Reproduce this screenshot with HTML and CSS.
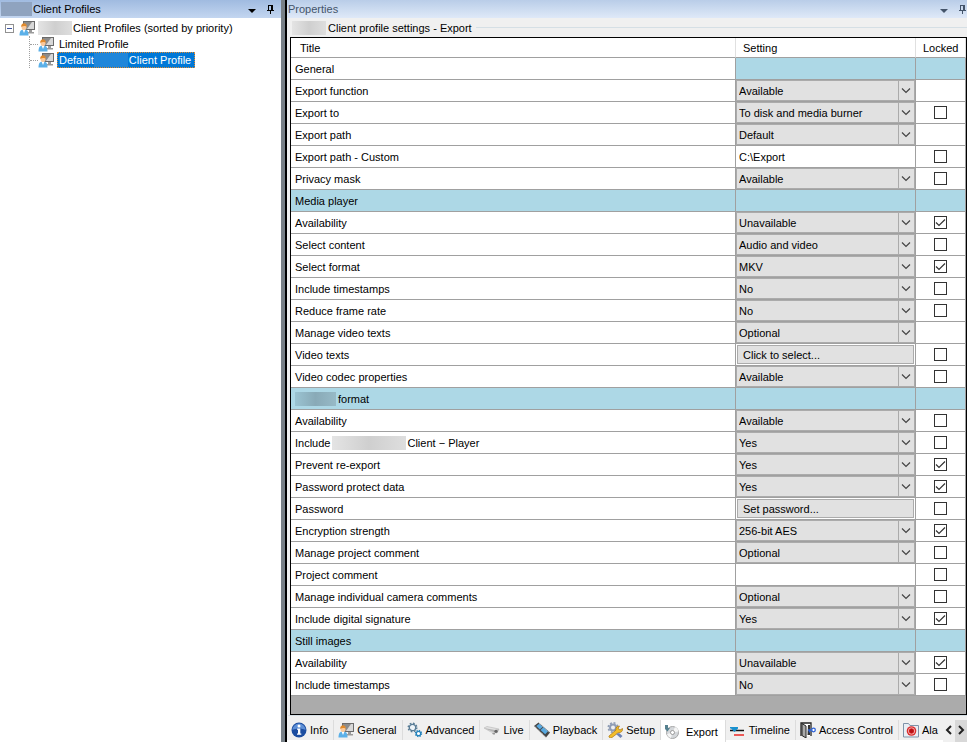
FILE: index.html
```html
<!DOCTYPE html>
<html lang="en">
<head>
    <meta charset="UTF-8">
    <title>Client Profiles</title>
    <link rel="stylesheet" href="styles.css">
</head>
<body>
    <svg class="defs">
        <symbol id="profile" viewBox="0 0 16 16">
            <path d="M4 1h12v9H4z" fill="#6b6b6b"/>
            <path d="M5 2h10v7H5z" fill="#8c8c8c"/>
            <path d="M15 2v7H8l5-7z" fill="#d8d8d8"/>
            <path d="M10 10h3v2h2v1.500H8V12h2z" fill="#9a9a9a"/>
            <path d="M.5 15.500c0-4.500 1.500-6 4.500-6s4.500 1.500 4.500 6z" fill="#5bb0e8"/>
            <path d="M3.500 9.500L5 13l1.500-3.500z" fill="#fff"/>
            <ellipse cx="5" cy="7" rx="2.500" ry="3" fill="#fbc99a"/>
            <path d="M2.300 7C1.500 2 8.500 2 7.700 7 7 5.500 4 5.500 2.300 7z" fill="#e08a2c"/>
        </symbol>
        <symbol id="pin" viewBox="0 0 7 9">
            <path d="M1 0h5v5H5V1H2v4H1zM4 1h1v4H4zM0 5h7v1H0zM3 6h1v3H3z" fill="currentColor"/>
        </symbol>
    </svg>
    <div class="container">
        <div class="sidebar">
            <div class="titlebar active">
                <span class="blur"></span>
                <h1>Client Profiles</h1>
                <span class="arrow"></span>
                <svg class="pin"><use href="#pin"/></svg>
            </div>
            <ul class="tree">
                <li>
                    <div class="node"><span class="toggle"></span><svg class="icon"><use href="#profile"/></svg><span class="label root"><span class="blur"></span>Client Profiles (sorted by priority)</span></div>
                    <ul>
                        <li><div class="node"><svg class="icon"><use href="#profile"/></svg><span class="label">Limited Profile</span></div></li>
                        <li><div class="node"><svg class="icon"><use href="#profile"/></svg><span class="label selected">Default<span class="blur"></span>Client Profile</span></div></li>
                    </ul>
                </li>
            </ul>
        </div>
        <div class="splitter"></div>
        <div class="properties">
            <div class="titlebar">
                <h1>Properties</h1>
                <span class="arrow"></span>
                <svg class="pin"><use href="#pin"/></svg>
            </div>
            <div class="group">
                <h2><span class="blur"></span>Client profile settings - Export</h2>
                <div class="grid">
                    <table>
                        <thead>
                            <tr><th>Title</th><th class="setting">Setting</th><th class="locked">Locked</th></tr>
                        </thead>
                        <tbody></tbody>
                    </table>
                </div>
            </div>
            <div class="tabs">
                <div class="tablist">
                    <button class="tab"><svg class="icon" viewBox="0 0 16 16"><circle cx="8" cy="8" r="7.500" fill="#1c4da0"/><path d="M1.500 8a6.500 6.500 0 0 1 13 0c-4-2-9-2-13 0z" fill="#5d8fd6"/><circle cx="8" cy="4" r="1.500" fill="#fff"/><path d="M6 6.500h3.300v5h1v1.200H6v-1.200h1V7.700H6z" fill="#fff"/></svg>Info</button>
                    <button class="tab"><svg class="icon"><use href="#profile"/></svg>General</button>
                    <button class="tab"><svg class="icon" viewBox="0 0 16 16"><circle cx="5.500" cy="5.500" r="3.200" fill="#eef4f8" stroke="#5a7d96" stroke-width="1.300"/><circle cx="5.500" cy="5.500" r="4.300" fill="none" stroke="#5a7d96" stroke-width="1.400" stroke-dasharray="1.700 1.680"/><circle cx="11.500" cy="11.500" r="2.200" fill="#fff" stroke="#2684bd" stroke-width="1.300"/><circle cx="11.500" cy="11.500" r="3.100" fill="none" stroke="#2684bd" stroke-width="1.200" stroke-dasharray="1.300 1.130"/></svg>Advanced</button>
                    <button class="tab"><svg class="icon" viewBox="0 0 16 16"><path d="M0 6l3-1.500 12 2.500-2 4-6-1z" fill="#e2e2e2" stroke="#b5b5b5" stroke-width=".6"/><path d="M0 6l8 3.500 5 1.500 2-4-4 1z" fill="#b5b5b5"/><circle cx="12" cy="9.300" r="1.600" fill="#666"/><path d="M8 11h3v1.500H9z" fill="#999"/></svg>Live</button>
                    <button class="tab"><svg class="icon" viewBox="0 0 16 16"><path d="M0 4l4.500-3.500L16 10.500l-4 5z" fill="#444"/><path d="M2.300 4l3-2.300 3.500 3-3 2.700zM6.500 8l3-2.700 4.500 4-2.800 3z" fill="#58a9e0"/><path d="M1 4.700l10.500 10M5 1L15.300 10.500" stroke="#ccc" stroke-width=".9" stroke-dasharray="1 1"/></svg>Playback</button>
                    <button class="tab"><svg class="icon" viewBox="0 0 16 16"><circle cx="6" cy="5.500" r="3" fill="none" stroke="#8f9db5" stroke-width="2"/><circle cx="6" cy="5.500" r="4.700" fill="none" stroke="#8f9db5" stroke-width="1.600" stroke-dasharray="2 1.690"/><path d="M2 14l7-6c-.5-2.500 1-4 3.500-4L11 6.500l2 1.500 2.500-1.500c.5 3-2 4.500-4 4L5 15.500c-2 .8-3.500 0-3-1.500z" fill="#f2bd2a" stroke="#a87411" stroke-width=".7"/><path d="M9 12l3-1 3.500 3-2 2z" fill="#6d83b5"/></svg>Setup</button>
                    <button class="tab current"><svg class="icon" viewBox="0 0 16 16"><circle cx="7.500" cy="8.500" r="6" fill="#d4d7da" stroke="#a5a5a5"/><path d="M7.500 8.500L10 3c2 .8 3.300 2.500 3.500 4.500zM7.500 8.500L6 14c-2-.5-3.500-2-4-4z" fill="#f5f5f5"/><circle cx="7.500" cy="8.500" r="2" fill="#fff" stroke="#888" stroke-width=".8"/><path d="M0 1h3v3h2L2.500 7.500 0 5z" fill="#55808f"/></svg>Export</button>
                    <button class="tab"><svg class="icon" viewBox="0 0 16 16"><path d="M0 8.500h14" stroke="#111" stroke-width="1.500"/><path d="M0 5h8v1.500L4.500 10 1 6.500H0z" fill="#1a91cf"/><path d="M4 13h10" stroke="#ec5a58" stroke-width="2"/></svg>Timeline</button>
                    <button class="tab"><svg class="icon" viewBox="0 0 16 16"><path d="M1 14V1h10v13" fill="#fff" stroke="#222" stroke-width="1.300"/><path d="M2 1.500l4 2.500v12l-4-2.500z" fill="#aaa" stroke="#222"/><path d="M8 3h2v10H7.500z" fill="#333"/><path d="M8 8h5M9.500 8v2.500" stroke="#2d62d8" stroke-width="1.400"/><circle cx="13.500" cy="8" r="1.800" fill="#fff" stroke="#2d62d8" stroke-width="1.300"/></svg>Access Control</button>
                    <button class="tab"><svg class="icon" viewBox="0 0 16 16"><path d="M.5 15V1.500h5l1.500 2h8.500V15z" fill="#e9eef4" stroke="#7f93a8"/><circle cx="8.500" cy="9" r="4.800" fill="#d92a2a"/><circle cx="8.500" cy="9" r="3.200" fill="none" stroke="#f7c4c4" stroke-width=".8"/><circle cx="8.500" cy="9" r="2" fill="#b80f14"/></svg>Ala</button>
                </div>
                <button class="scroll" aria-label="Previous"><svg viewBox="0 0 8 10"><path d="M6 1L2 5l4 4"/></svg></button>
                <button class="scroll next" aria-label="Next"><svg viewBox="0 0 8 10"><path d="M2 1l4 4-4 4"/></svg></button>
            </div>
        </div>
    </div>
<script src="script.js"></script>
</body>
</html>
```
FILE: styles.css
```css
*{
    box-sizing: border-box;
    margin: 0;
    padding: 0;
}
body,button,select,input{
    font-family: "Liberation Sans", Arial, sans-serif;
    font-size: 11px;
    color: #000;
}
h1,h2,th{
    font-size: 11px;
    font-weight: normal;
}
ul{
    list-style: none;
}
.defs{
    display: none;
}
.container{
    display: flex;
    height: 100vh;
    overflow: hidden;
}
.sidebar{
    width: 281px;
    flex: none;
    background: #fff;
}
.splitter{
    width: 6px;
    flex: none;
    background: #788087;
    border-right: 2px solid #000;
}
.properties{
    flex: 1;
    min-width: 0;
    display: flex;
    flex-direction: column;
    background: #f0f0f0;
}
.titlebar{
    display: flex;
    align-items: center;
    height: 18px;
    flex: none;
    padding: 0 1px;
    color: #44546a;
    background: linear-gradient(#b9cde8, #dfe9f8);
}
.titlebar.active{
    padding-right: 7px;
    color: #000;
    background: linear-gradient(#a0bbe0, #c3d6f0);
}
.titlebar h1{
    flex: 1;
}
.titlebar .blur{
    width: 31px;
    height: 14px;
    margin-right: 1px;
    background: #8fa3bf;
}
.arrow{
    border: 4px solid transparent;
    border-top-color: currentColor;
    border-bottom: 0;
    margin: 3px 11px 0 0;
}
.pin{
    width: 7px;
    height: 9px;
}
.icon{
    width: 16px;
    height: 16px;
    flex: none;
}
.blur{
    display: inline-block;
    height: 14px;
    background: linear-gradient(90deg, #e4e4e4, #cfcfcf 50%, #dedede);
}

/* tree */
.tree{
    padding: 2px 0 0 5px;
}
.node{
    display: flex;
    align-items: center;
    height: 16px;
}
.toggle{
    width: 9px;
    height: 9px;
    margin-right: 5px;
    border: 1px solid #919191;
    background: linear-gradient(#3b53a0, #3b53a0) center / 5px 1px no-repeat #fff;
}
.label{
    display: flex;
    align-items: center;
    height: 16px;
    margin-left: 3px;
    padding: 0 4px 0 2px;
}
.label.root{
    padding: 0;
}
.label .blur{
    width: 34px;
    margin-right: 1px;
}
.tree ul{
    margin-left: 24px;
    border-left: 1px dotted #a0a0a0;
}
.tree ul .node::before{
    content: "";
    width: 8px;
    border-top: 1px dotted #a0a0a0;
}
.selected{
    color: #fff;
    background: #0078d7;
    outline: 1px dotted #e08a30;
    outline-offset: -1px;
}
.selected .blur{
    background: #1f86da;
}

/* settings grid */
.group{
    flex: 1;
    min-height: 0;
    display: flex;
    flex-direction: column;
    margin: 2px 0 4px 1px;
    border-bottom: 1px solid #d5dfe5;
}
.group h2{
    display: flex;
    align-items: center;
    height: 17px;
    flex: none;
    padding: 0 0 2px 4px;
}
.group h2 .blur{
    width: 34px;
    margin-right: 2px;
}
.group h2::after{
    content: "";
    flex: 1;
    margin-left: 4px;
    border-top: 1px solid #d5dfe5;
}
.grid{
    flex: 1;
    min-height: 0;
    margin-left: 2px;
    overflow: hidden;
    border: 1px solid #000;
    background: #ababab;
}
table{
    width: 100%;
    table-layout: fixed;
    border-collapse: separate;
    border-spacing: 0;
    background: #fff;
}
th,td{
    height: 22px;
    border-right: 1px solid #a0a0a0;
    border-bottom: 1px solid #a0a0a0;
    text-align: left;
    white-space: nowrap;
}
th{
    height: 20px;
    padding-left: 9px;
    border-right-color: #e0e0e0;
}
td:first-child{
    padding-left: 4px;
}
th.setting{
    width: 180px;
    padding-left: 7px;
}
th.locked{
    width: 50px;
    padding-left: 7px;
}
.section td,.cyan{
    background: #add8e6;
}
.name{
    display: flex;
    align-items: center;
}
.name .blur{
    width: 74px;
    margin: 0 1px 0 2px;
}
.section .blur{
    width: 41px;
    margin: 0 2px 0 0;
    background: linear-gradient(90deg, #9ac3d1, #89aab7 50%, #97bac7);
}
select,.text,.push{
    display: block;
    width: 100%;
    height: 21px;
    border: 1px solid #ababab;
    border-radius: 0;
    outline: 0;
}
select{
    appearance: none;
    padding: 0 20px 0 2px;
    background: url("data:image/svg+xml,%3Csvg xmlns='http://www.w3.org/2000/svg' width='16' height='19'%3E%3Cpath d='M.5 0v19' stroke='%23ababab'/%3E%3Cpath d='M4 7.500l4 4 4-4' fill='none' stroke='%23444' stroke-width='1.200'/%3E%3C/svg%3E") right center no-repeat #e1e1e1;
}
.text{
    border: 0;
    padding: 0 3px;
}
.push{
    width: calc(100% - 2px);
    height: 19px;
    margin: 0 1px;
    padding-left: 5px;
    text-align: left;
    background: #e1e1e1;
}
input[type="checkbox"]{
    appearance: none;
    display: block;
    width: 13px;
    height: 13px;
    margin: 0 auto;
    border: 1px solid #333;
    background: #fff;
}
input[type="checkbox"]:checked{
    background: url("data:image/svg+xml,%3Csvg xmlns='http://www.w3.org/2000/svg' width='11' height='11'%3E%3Cpath d='M1 5.500l3 3 6-6' fill='none' stroke='%23333' stroke-width='1.200'/%3E%3C/svg%3E") center no-repeat #fff;
}

/* bottom tabs */
.tabs{
    display: flex;
    height: 22px;
    flex: none;
    background: #fff;
}
.tablist{
    flex: 1;
    min-width: 0;
    display: flex;
    overflow: hidden;
}
.tab{
    display: flex;
    align-items: center;
    flex: none;
    gap: 3px;
    height: 20px;
    padding: 0 5px 0 4px;
    border: 0;
    border-right: 1px solid #dcdcdc;
    background: #f0f0f0;
    white-space: nowrap;
}
.tab.current{
    height: 22px;
    gap: 5px;
    padding: 2px 7px 0 4px;
    background: #fff;
}
.tab:last-child{
    flex: 1;
    border-right: 0;
}
.scroll{
    width: 12px;
    flex: none;
    border: 0;
    background: #f0f0f0;
}
.scroll.next{
    background: #d8d8d8;
}
.scroll svg{
    width: 8px;
    height: 10px;
    fill: none;
    stroke: #222;
    stroke-width: 2;
}
```
FILE: script.js
```js
// [title, type, value, locked]  locked: null = no checkbox
const rows = [
    ["General", "first"],
    ["Export function", "select", "Available", null],
    ["Export to", "select", "To disk and media burner", false],
    ["Export path", "select", "Default", null],
    ["Export path - Custom", "text", "C:\\Export", false],
    ["Privacy mask", "select", "Available", false],
    ["Media player", "section"],
    ["Availability", "select", "Unavailable", true],
    ["Select content", "select", "Audio and video", false],
    ["Select format", "select", "MKV", true],
    ["Include timestamps", "select", "No", false],
    ["Reduce frame rate", "select", "No", false],
    ["Manage video texts", "select", "Optional", null],
    ["Video texts", "button", "Click to select...", false],
    ["Video codec properties", "select", "Available", false],
    ["<span class='blur'></span>format", "section"],
    ["Availability", "select", "Available", false],
    ["Include<span class='blur'></span>Client − Player", "select", "Yes", false],
    ["Prevent re-export", "select", "Yes", true],
    ["Password protect data", "select", "Yes", true],
    ["Password", "button", "Set password...", false],
    ["Encryption strength", "select", "256-bit AES", true],
    ["Manage project comment", "select", "Optional", false],
    ["Project comment", "text", "", false],
    ["Manage individual camera comments", "select", "Optional", false],
    ["Include digital signature", "select", "Yes", true],
    ["Still images", "section"],
    ["Availability", "select", "Unavailable", true],
    ["Include timestamps", "select", "No", false]
];

function control(type, value, id) {
    if (type === "select") return `<select id="${id}"><option>${value}</option></select>`;
    if (type === "text") return `<input type="text" class="text" id="${id}" value="${value}">`;
    return `<button class="push" id="${id}">${value}</button>`;
}

document.querySelector("tbody").innerHTML = rows.map(([title, type, value, locked], i) => {
    if (type === "section") return `<tr class="section"><td><div class="name">${title}</div></td><td></td><td></td></tr>`;
    if (type === "first") return `<tr><td>${title}</td><td class="cyan"></td><td class="cyan"></td></tr>`;
    const check = locked === null ? "" : `<input type="checkbox" aria-label="Locked" ${locked ? "checked" : ""}>`;
    return `<tr><td><label class="name" for="s${i}">${title}</label></td><td>${control(type, value, "s" + i)}</td><td>${check}</td></tr>`;
}).join("");
```
